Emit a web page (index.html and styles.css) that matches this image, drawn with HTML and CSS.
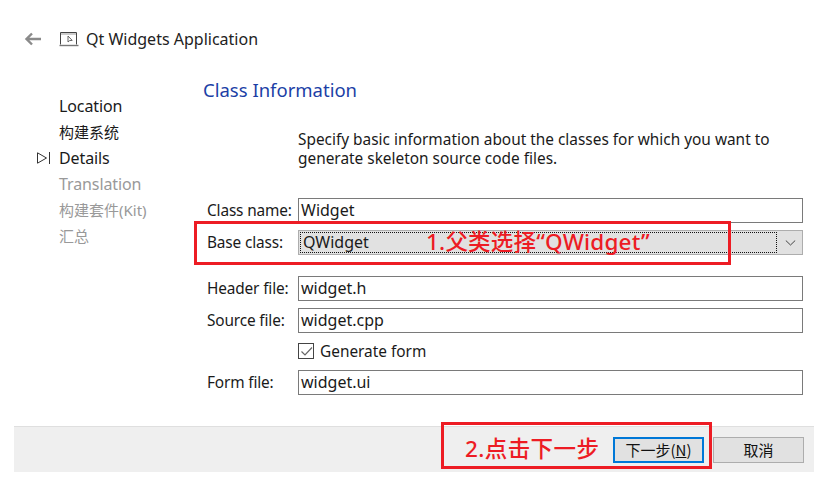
FILE: index.html
```html
<!DOCTYPE html>
<html lang="zh">
<head>
<meta charset="utf-8">
<title>Qt Widgets Application</title>
<link rel="stylesheet" href="styles.css">
</head>
<body>
<div class="page">
  <header class="top">
    <svg class="back" width="18" height="14" viewBox="0 0 18 14"><path d="M8 1.500 2.500 7 8 12.500M3 7H17" fill="none" stroke="#8a8a8a" stroke-width="2.400"/></svg>
    <svg class="app" width="20" height="16" viewBox="0 0 20 16"><path d="M1.500 13.500V1.500h16V13.500" fill="#fff" stroke="#444" stroke-width="1"/><path d="M2 3h15" stroke="#999" stroke-width="1"/><path d="M.5 14.500h19" stroke="#777" stroke-width="1.400"/><path d="M9 5v6l1.600-1.400 2.600-.2z" fill="#fff" stroke="#555" stroke-width=".9"/></svg>
    <span class="app-title">Qt Widgets Application</span>
  </header>
  <div class="main">
    <nav class="steps">
      <div class="step done">Location</div>
      <div class="step done zh">构建系统</div>
      <div class="step done current"><svg class="marker" width="13" height="12" viewBox="0 0 13 12"><path d="M.5.800 9.500 6 .5 11.200z" fill="none" stroke="#333"/><path d="M12.500 0v12" stroke="#333"/></svg>Details</div>
      <div class="step">Translation</div>
      <div class="step zh">构建套件(Kit)</div>
      <div class="step zh">汇总</div>
    </nav>
    <section class="content">
      <h1 class="heading">Class Information</h1>
      <p class="desc">Specify basic information about the classes for which you want to generate skeleton source code files.</p>
      <div class="form">
        <label class="lbl">Class name:</label><div class="field">Widget</div>
        <label class="lbl base">Base class:</label>
        <div class="combo"><div class="combo-text"><span>QWidget</span></div><svg class="chev" width="11" height="6" viewBox="0 0 11 6"><path d="M.8.500 5.500 5 10.200.5" fill="none" stroke="#444"/></svg></div>
        <label class="lbl head">Header file:</label><div class="field head">widget.h</div>
        <label class="lbl">Source file:</label><div class="field">widget.cpp</div>
        <span></span><div class="check"><span class="box"><svg width="13" height="11" viewBox="0 0 13 11"><path d="M1.500 5.500 5 9 12 1.500" fill="none" stroke="#666" stroke-width="1.200"/></svg></span>Generate form</div>
        <label class="lbl">Form file:</label><div class="field">widget.ui</div>
      </div>
    </section>
  </div>
  <footer class="bottom">
    <button class="btn primary">下一步(<u>N</u>)</button>
    <button class="btn">取消</button>
  </footer>
  <div class="note note-one">1.父类选择“QWidget”</div>
  <div class="note note-two">2.点击下一步</div>
</div>
</body>
</html>
```
FILE: styles.css
```css
* { box-sizing: border-box; }
html, body { margin: 0; padding: 0; background: #fff; }
body { width: 833px; height: 483px; overflow: hidden; font-family: "Noto Sans", "Noto Sans CJK SC", sans-serif; font-size: 15.400px; color: #1a1a1a; }
.page { position: relative; width: 833px; height: 483px; display: flex; flex-direction: column; }
.top { height: 24px; margin-top: 27px; margin-bottom: 1px; padding-left: 24px; display: flex; align-items: center; }
.back { margin-right: 17px; }
.app { margin-right: 7px; }
.app-title { font-size: 16px; color: #222; }
.main { display: flex; flex: 1; }
.steps { width: 203px; padding: 41px 0 0 59px; }
.step { position: relative; height: 26px; line-height: 26px; color: #999; font-size: 16px; letter-spacing: -.1px; }
.step.zh { font-size: 15px; letter-spacing: 0; }
.step.done { color: #1a1a1a; }
.marker { position: absolute; left: -22px; top: 7px; }
.content { flex: 1; }
.heading { margin: 26px 0 0; height: 24px; line-height: 24px; font-size: 18.500px; font-weight: 400; color: #1c3fa6; }
.desc { margin: 28px 0 0 95px; width: 490px; line-height: 19px; color: #1a1a1a; }
.form { margin: 30px 30px 0 4px; display: grid; grid-template-columns: 91px 505px; row-gap: 7px; align-items: center; }
.lbl { height: 25px; line-height: 25px; font-size: 15.400px; letter-spacing: -.15px; color: #1a1a1a; }
.field { height: 25px; line-height: 23px; border: 1px solid #7a7a7a; padding-left: 2px; font-size: 16px; background: #fff; }
.field.head, .lbl.head { margin-top: 14px; }
.combo { height: 25px; display: flex; align-items: center; border: 1px solid #adadad; background: #e1e1e1; padding: 1px 0 1px 1px; }
.combo-text { flex: 1; height: 21px; line-height: 19px; border: 1px dotted #111; padding-left: 2px; font-size: 16px; }
.chev { margin: 0 6px 0 8px; }
.check { height: 16px; margin-top: 3px; margin-bottom: 4px; display: flex; align-items: center; }
.box { width: 16px; height: 16px; border: 1px solid #444; margin-right: 6px; display: flex; align-items: center; justify-content: center; }
.bottom { margin: 0 19px 11px 14px; height: 46px; background: #efefef; border-top: 1px solid #dfdfdf; display: flex; justify-content: flex-end; align-items: center; gap: 9px; padding-right: 10px; }
.btn { width: 91px; height: 26px; padding: 0; border: 1px solid #adadad; background: #e1e1e1; font: 15px "Noto Sans CJK SC", "Noto Sans", sans-serif; color: #111; }
.btn.primary { border: 2px solid #0078d7; }
.note { position: absolute; border: 3px solid #ed1c24; color: #ed1c24; font-family: "Noto Sans", "Noto Sans CJK SC", sans-serif; font-weight: 500; font-size: 22.500px; }
.note-one { left: 194px; top: 221px; width: 537px; height: 44px; line-height: 36px; padding-left: 229px; letter-spacing: .2px; }
.note-two { left: 441px; top: 422px; width: 271px; height: 47px; line-height: 47px; padding-left: 21px; letter-spacing: .4px; }
```
